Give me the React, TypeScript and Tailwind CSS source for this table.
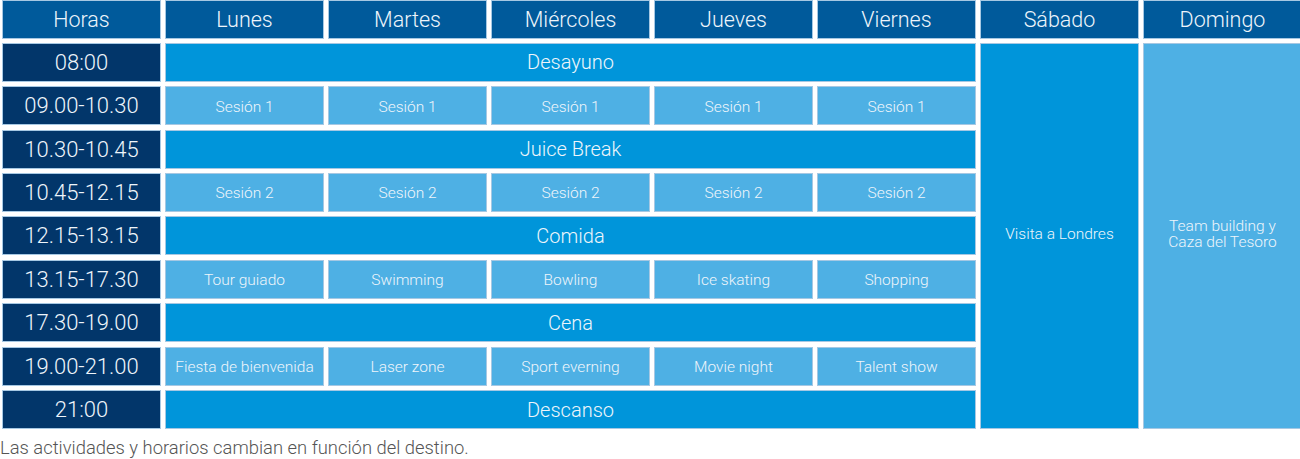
import React from 'react'

const days = ['Lunes', 'Martes', 'Miércoles', 'Jueves', 'Viernes']

type Row = {
  time: string;
  full?: string;
  cells?: string[];
};

const rows: Row[] = [
  { time: '08:00', full: 'Desayuno' },
  { time: '09.00-10.30', cells: ['Sesión 1', 'Sesión 1', 'Sesión 1', 'Sesión 1', 'Sesión 1'] },
  { time: '10.30-10.45', full: 'Juice Break' },
  { time: '10.45-12.15', cells: ['Sesión 2', 'Sesión 2', 'Sesión 2', 'Sesión 2', 'Sesión 2'] },
  { time: '12.15-13.15', full: 'Comida' },
  { time: '13.15-17.30', cells: ['Tour guiado', 'Swimming', 'Bowling', 'Ice skating', 'Shopping'] },
  { time: '17.30-19.00', full: 'Cena' },
  { time: '19.00-21.00', cells: ['Fiesta de bienvenida', 'Laser zone', 'Sport everning', 'Movie night', 'Talent show'] },
  { time: '21:00', full: 'Descanso' },
]

const cell = 'flex items-center justify-center border border-[#a6c8e3] text-[#eef5fb] text-center'

export default function App() {
  return (
    <div className="w-[1300px] h-[459px] overflow-hidden bg-white font-['Roboto',sans-serif] font-light">
      <div className="pl-[2px]">
        <div className="grid grid-cols-[repeat(8,159px)] grid-rows-[38.5px_repeat(9,39px)] gap-x-[4px] gap-y-[4.4px]">
          <div className={`${cell} bg-[#005a9b] text-[21.5px] pt-[2px]`}>Horas</div>
          {days.map((d) => (
            <div key={d} className={`${cell} bg-[#005a9b] text-[21.5px] pt-[2px]`}>{d}</div>
          ))}
          <div className={`${cell} bg-[#005a9b] text-[21.5px] pt-[2px]`}>Sábado</div>
          <div className={`${cell} bg-[#005a9b] text-[21.5px] pt-[2px]`}>Domingo</div>

          {rows.map((r, i) => (
            <React.Fragment key={r.time}>
              <div className={`${cell} bg-[#02366a] text-[22px]`} style={{ gridRow: i + 2, gridColumn: 1 }}>
                {r.time}
              </div>
              {r.full ? (
                <div
                  className={`${cell} bg-[#0095da] text-[20px]`}
                  style={{ gridRow: i + 2, gridColumn: '2 / span 5' }}
                >
                  {r.full}
                </div>
              ) : (
                r.cells!.map((c, j) => (
                  <div
                    key={j}
                    className={`${cell} bg-[#4eb0e4] text-[15.5px] pt-[3px]`}
                    style={{ gridRow: i + 2, gridColumn: j + 2 }}
                  >
                    {c}
                  </div>
                ))
              )}
            </React.Fragment>
          ))}

          <div className={`${cell} col-start-7 row-start-2 row-span-9 bg-[#0095da] text-[15.5px]`}>
            <span className="-translate-y-[1px]">Visita a Londres</span>
          </div>
          <div className={`${cell} col-start-8 row-start-2 row-span-9 bg-[#4eb0e4] text-[15.5px] leading-[16px]`}>
            <span className="-translate-y-[2px]">Team building y<br />Caza del Tesoro</span>
          </div>
        </div>
      </div>
      <p className="mt-[8px] text-[18.4px] text-[#555555] leading-[22px]">
        Las actividades y horarios cambian en función del destino.
      </p>
    </div>
  )
}
